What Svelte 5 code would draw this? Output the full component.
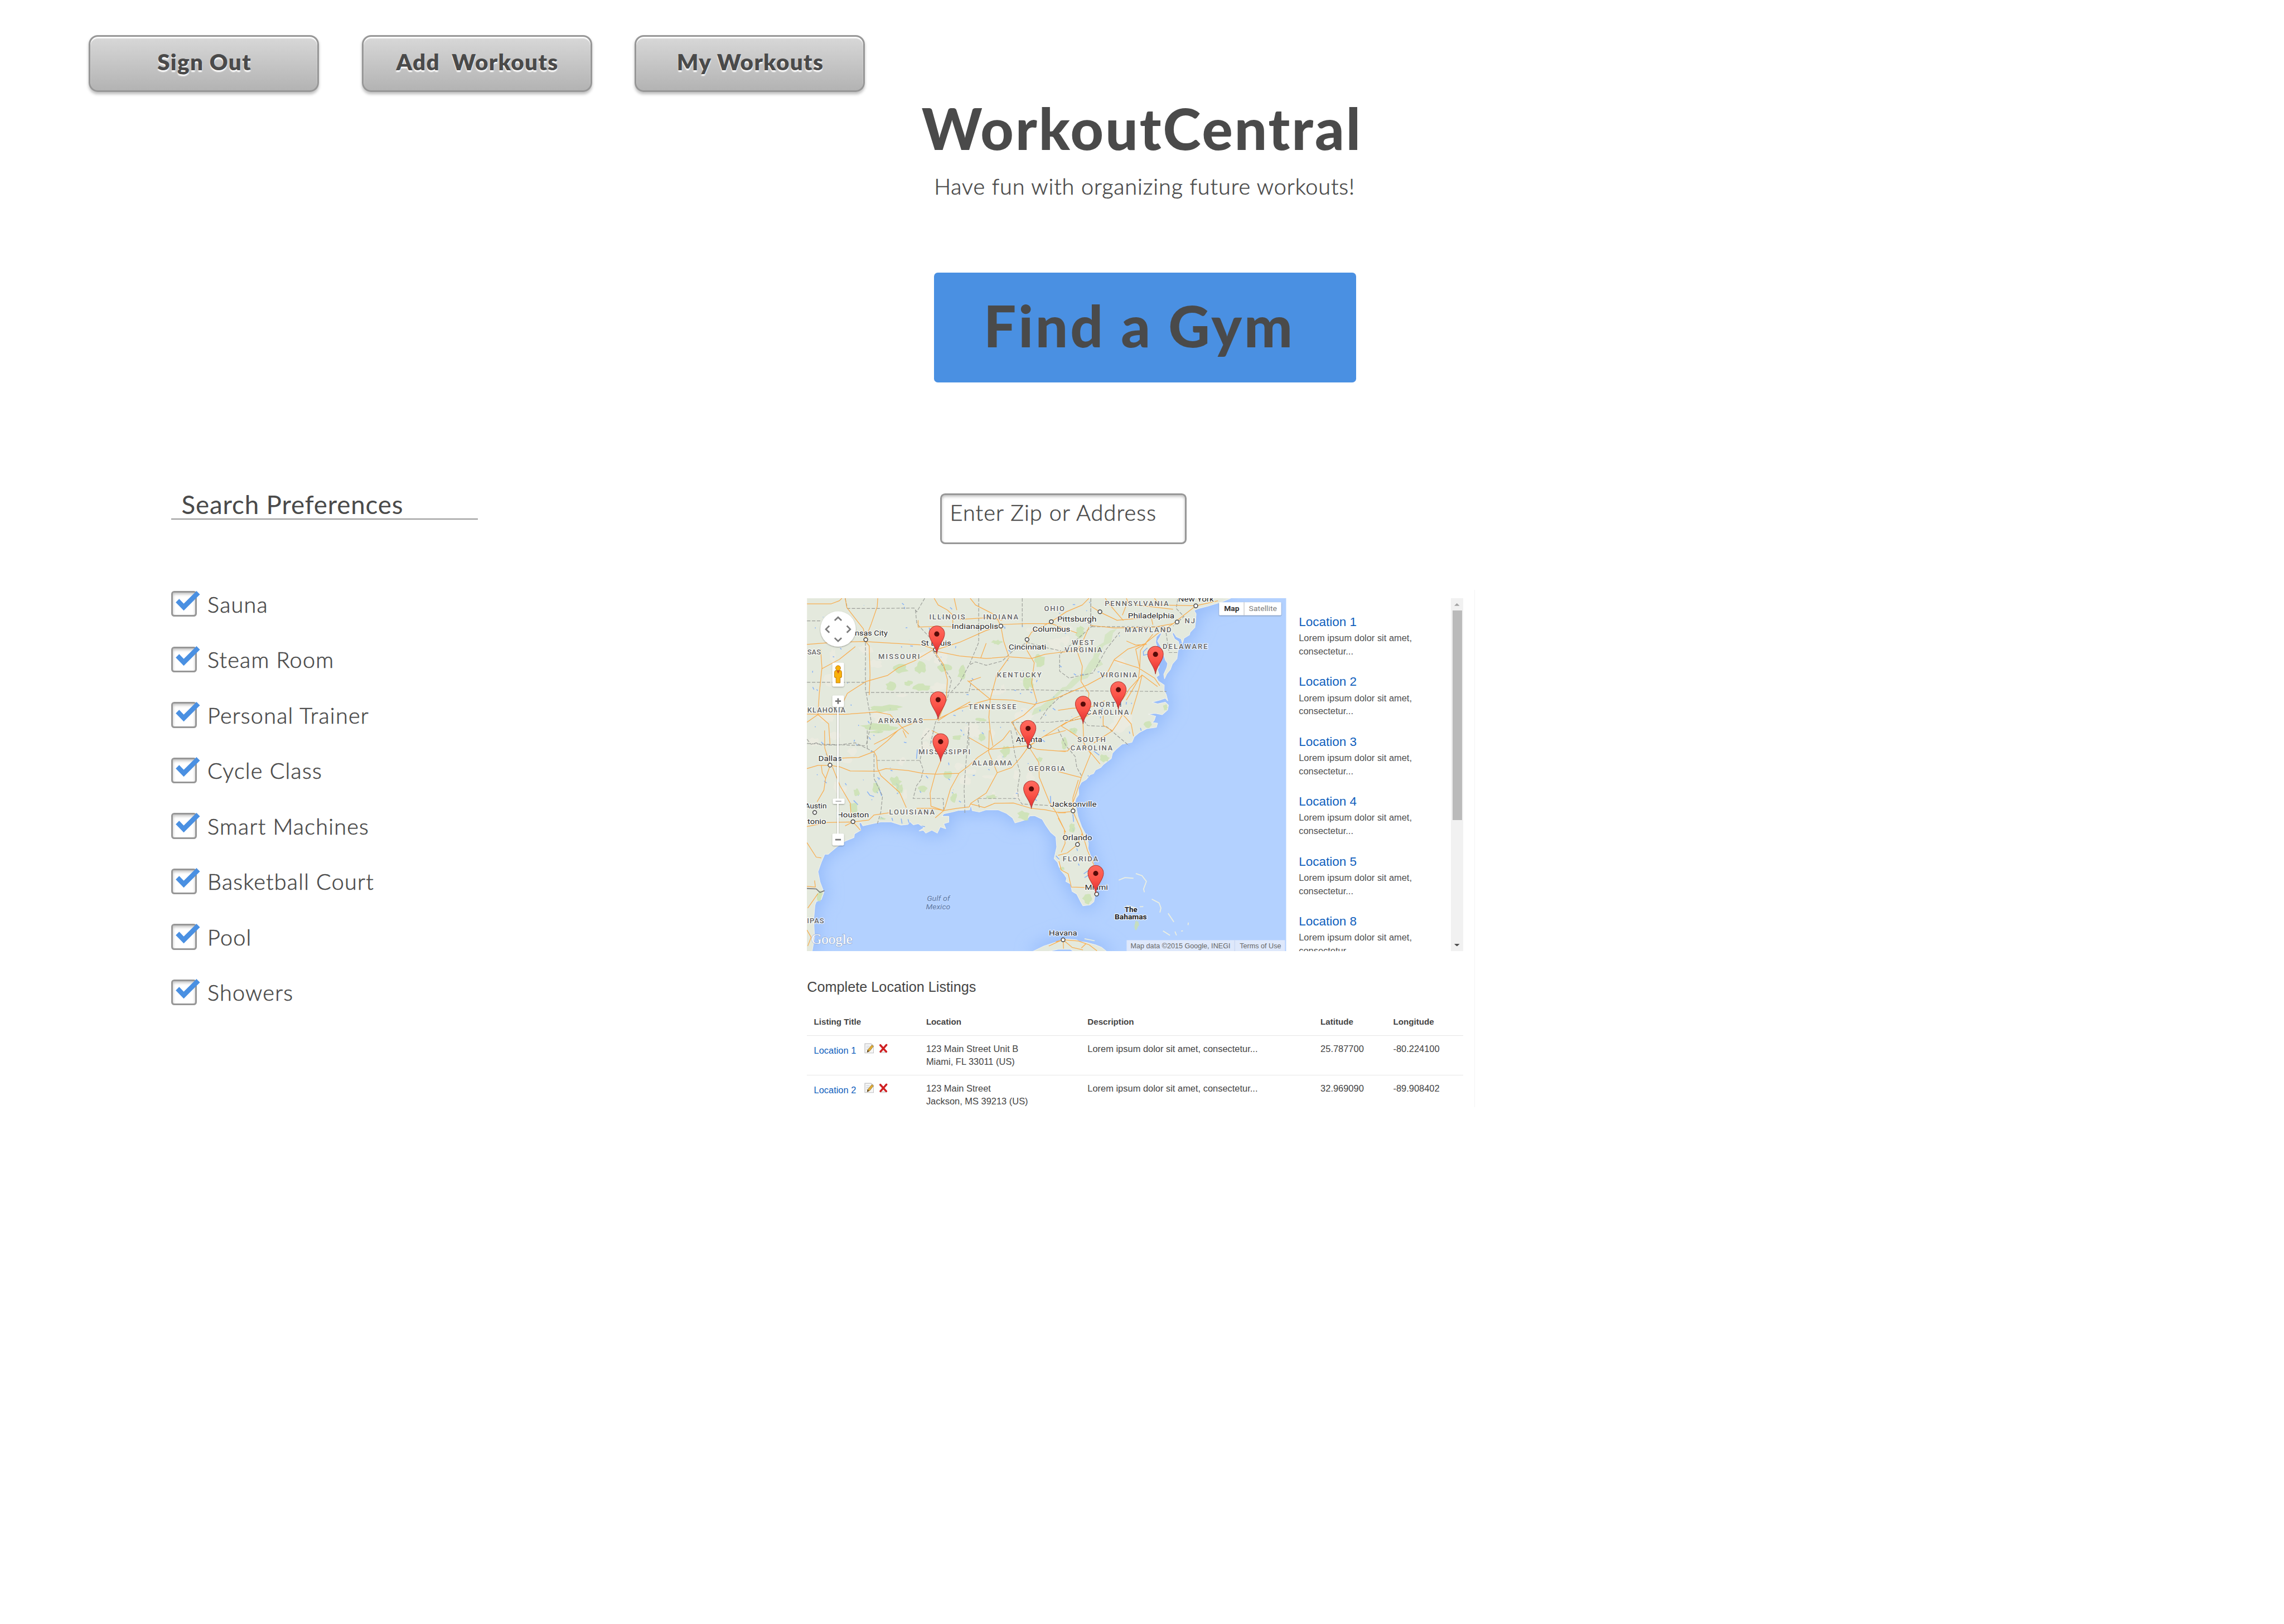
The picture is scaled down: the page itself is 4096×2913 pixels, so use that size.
<script>
  const navItems = ['Sign Out', 'Add \u00a0Workouts', 'My Workouts'];

  const preferences = [
    'Sauna', 'Steam Room', 'Personal Trainer', 'Cycle Class',
    'Smart Machines', 'Basketball Court', 'Pool', 'Showers'
  ];

  const locations = [1, 2, 3, 4, 5, 8];

  const listings = [
    { title: 'Location 1', address: ['123 Main Street Unit B', 'Miami, FL 33011 (US)'], lat: '25.787700', lng: '-80.224100' },
    { title: 'Location 2', address: ['123 Main Street', 'Jackson, MS 39213 (US)'], lat: '32.969090', lng: '-89.908402' }
  ];

  // The map is charted on four sheets, each with its own origin and scale.
  const sheets = {
    n: [2100, 1260, 0.7015, 0.4464],
    w: [2100, 1920, 0.4464, 0.3827],
    e: [2780, 1560, 0.4082, 0.3571],
    s: [2780, 2050, 0.4082, 0.3333]
  };
  const at = (sheet, x, y) => {
    const [ox, oy, sx, sy] = sheets[sheet];
    return [+(ox + x * sx).toFixed(1), +(oy + y * sy).toFixed(1)];
  };
  const chain = (sheet, text) =>
    text.trim().split(/\s+/).map((p) => at(sheet, ...p.split(',').map(Number)).join(' ')).join(' L');
  const lines = (sheet, text) => text.split(';').map((t) => 'M' + chain(sheet, t)).join(' ');

  const mainland =
    'M2120 1572 L' +
    chain('e', '0,30 1000,30 1110,36 1060,60 960,95 900,112 875,125 888,150 885,200 880,250 850,285 845,305 810,330 800,368 792,335 760,318 742,285 736,300 750,335 775,355 780,385 770,430 765,480 735,520 722,560 700,590 685,628 680,595 700,545 705,515 690,490 676,440 660,390 640,350 655,320 668,288 648,300 632,320 628,360 636,390 625,420 600,440 640,500 650,540 640,560 650,600 632,615 645,645 683,675 682,715 696,745 706,790 690,770 655,785 605,800 640,812 690,800 710,822 704,858 670,892 625,882 580,888 628,903 618,935 606,950 640,955 632,985 570,995 520,1025 490,1055 475,1095 410,1110 370,1150 350,1175 342,1215 290,1260 275,1280 240,1300 228,1325 205,1335 180,1370 150,1390 130,1430 133,1480 115,1510 108,1540') +
    ' L' +
    chain('s', '105,165 118,230 128,290 152,370 182,440 195,500 192,540 210,600 228,660 240,700 245,800 242,880 230,960 205,985 160,992 145,960 120,900 90,878 80,820 50,800 55,775 40,745 15,710 5,660 0,600') +
    ' L' +
    chain('w', '1530,940 1520,905 1500,880 1515,800 1510,730 1480,700 1450,650 1430,610 1385,585 1355,588 1340,610 1300,625 1270,635 1255,600 1220,570 1170,545 1100,545 1060,560 1018,550 1010,510 1002,545 940,548 900,560 850,572 840,590 880,590 880,630 850,640 862,675 830,662 812,705 780,685 745,705 730,685 705,690 735,668 700,640 672,648 650,625 640,645 600,650 540,628 480,628 430,640 375,655 362,630 352,640 362,685 325,710 322,735 270,760 220,800 170,850 150,850 130,905 110,970 122,1040 145,1110 130,1160 100,1175 92,1200 85,1300 90,1420 75,1520 40,1520') +
    'Z';

  const cuba =
    'M' + chain('w', '1370,1520 1440,1480 1530,1445') + ' L' +
    chain('s', '32,1252 120,1262 140,1275 180,1280 240,1300 280,1320 312,1352 100,1352 80,1335 0,1335 -60,1352') + 'Z';

  const roads = [
    lines('n', `29,733 120,733 150,715 160,700; 172,700 178,755 215,830 240,880 248,945; 294,700 292,750 270,850 250,930;
      29,972 130,960 240,955 460,975 505,1000; 248,955 262,980 265,1150 262,1270; 505,1000 430,1070 370,1110 330,1155 250,1190 180,1260 165,1310;
      505,1010 600,1040 700,1055 780,1045; 510,1005 600,960 700,890 755,864; 755,864 765,950 785,1045; 755,855 850,850 944,850;
      755,864 735,800 660,740 640,700; 853,943 870,900 944,838 1000,780 1060,740 1085,700; 785,1045 870,1055 920,1030 970,1020 1040,1010;
      853,943 850,1000 880,1080 870,1200 890,1310; 505,1010 540,1090 555,1180 550,1300 525,1400; 515,1414 600,1350 680,1310 715,1295;
      630,1185 680,1250 715,1295; 635,1190 680,1165; 785,1050 740,1150 715,1295; 715,1295 800,1300 880,1325 960,1290 1080,1210 1150,1150 1180,1060 1230,1000 1300,965;
      715,1295 710,1400 715,1480 725,1568; 885,1325 840,1390 795,1430 825,1500 860,1568; 1040,1010 1060,1100 1055,1190 1085,1260 1075,1400;
      1180,1065 1270,1110 1330,1170 1350,1215; 1300,965 1260,1000 1275,1110 1270,1180 1225,1300; 1300,960 1340,910 1400,850 1440,800 1485,745;
      860,1568 930,1500 1000,1430 1060,1405 1110,1370; 385,1462 460,1415 515,1414; 29,1382 170,1384 290,1370 340,1385 385,1462;
      70,1385 110,1440 115,1560; 29,1430 70,1385; 385,1462 330,1520 280,1560; 385,1462 410,1500; 80,1000 85,1110 75,1260 70,1385; 85,1115 150,1060 210,985;
      505,700 520,740 555,770 575,800 575,850; 445,830 445,870 520,865 600,870; 580,700 590,770; 1090,860 1180,875 1330,870 1400,850;
      1095,750 1130,785 1190,830 1260,820 1320,800; 1085,870 1060,960 1040,1010; 1210,800 1230,720 1225,700; 1330,700 1350,740 1485,745;
      1260,740 1400,765; 700,965 680,1050; 945,850 1040,905; 600,825 700,815 760,830; 1485,745 1568,715; 520,1420 560,1380 640,1310`),
    lines('w', `149,0 150,120 182,238; 45,262 110,240 182,240 240,250 300,278 460,280 510,262 640,275 730,295 805,300 940,294 1000,240 1050,185 1120,130;
      182,240 155,330 145,410 105,490; 130,240 135,290 155,330; 195,250 240,380 300,500 305,580; 45,660 165,632 316,628 410,615 440,580 530,565; 316,628 360,685; 316,628 270,655;
      245,190 350,185 440,145 520,70 580,0; 440,145 455,180 460,260 480,310 590,425 630,530; 832,210 800,300 770,430 775,520 850,550;
      940,294 890,400 860,520 850,550; 850,550 800,600; 690,535 780,535 850,550; 850,550 930,535 1000,525 1010,500 1100,430 1165,290 1115,150 1118,0; 1000,50 1060,90 1120,130 1350,105;
      1165,290 1250,255 1300,190 1350,110 1440,40 1568,0; 1350,110 1400,130 1568,145; 1350,110 1410,220 1412,320 1440,400 1475,500 1510,560;
      1010,505 1090,530 1150,500 1260,498 1365,535 1450,545 1510,560 1568,565; 1510,560 1568,700; 45,770 100,870 130,875; 610,0 630,50;
      45,1070 95,1075 90,1030; 110,1120 50,1220; 45,1370 70,1420 50,1480; 1120,130 1200,60 1240,0; 780,0 830,30`),
    lines('e', `20,975 100,920 165,890; 20,975 70,1010 160,1080; 160,950 165,1100 210,1180 150,1350 120,1460 95,1540; 165,1110 270,1255; 0,1160 60,1160 100,1110;
      415,890 380,960 350,1010 230,1100; 420,895 470,960 485,1050; 540,600 520,700 470,890; 0,1310 80,1335 150,1355; 0,860 90,845 200,840 300,790;
      290,900 290,970 350,1010; 440,350 500,380 570,375; 610,300 560,370 530,420 525,550; 640,685 540,600 460,700 415,780; 300,30 330,80 420,200; 610,230 600,180`),
    lines('s', `0,260 80,250; 0,300 40,390 45,500 20,570; 100,260 150,400 190,560 230,670; 0,595 60,575 125,510 155,420;
      5,640 20,710 65,740 85,845 240,850; 130,0 95,140 95,240; -15,1275 32,1260 130,1270 200,1300 250,1347; 32,1260 90,1320 160,1340; 32,1260 35,1330; 180,1290 150,1325; -60,1310 0,1275 32,1260`)
  ].join(' ');

  const borders = [
    lines('n', `29,833 80,833; 172,700 180,760 300,760 430,758 440,780 470,700; 435,770 440,850 500,950; 248,960 248,1255; 29,1195 245,1195; 250,1255 635,1255 645,1185;
      645,1238 900,1240 1020,1245 1375,1249; 515,1432 940,1430; 672,700 672,960 640,1080 600,1200 570,1250; 835,700 835,870; 640,1090 660,1075 700,1095 760,1070 800,1010 853,960 920,990 980,1010;
      1092,700 1092,868 1370,868 1385,1020 1420,1020; 1100,860 1020,970 975,1030 975,1130 1010,1170 1100,1140 1150,1000 1200,900; 940,1430 1060,1410 1080,1450 1150,1455 1235,1568;
      250,1255 270,1430 250,1568; 500,1010 530,1080 570,1180 555,1290 510,1430 490,1568; 635,1430 635,1568; 800,1432 830,1568; 1020,1245 970,1290 930,1350 900,1420; 29,1555 100,1560 250,1568`),
    lines('w', `45,60 70,95 100,85 130,100 230,100 330,85 400,125 440,150 440,330 490,450 480,560 460,640; 400,0 400,125; 455,206 710,206 725,130 720,60 765,0; 710,206 730,270 715,340 690,380 670,467 847,467 850,550;
      995,0 970,400 975,570; 1060,530 1050,467 1290,467 1310,505 1475,515; 1245,0 1270,170 1300,290 1285,400 1290,467`),
    lines('e', `0,1000 50,1120 110,1200 120,1280 150,1340; 210,40 210,240; 770,40 760,110 810,170 740,240`)
  ].join(' ');

  const cays = lines('s', `390,790 430,770 485,775; 500,738 540,755 568,800 550,860 555,885; 603,940 650,970 662,1010 655,1045; 708,1052 745,1120;
    675,1190 720,1225; 752,1195 762,1225; 838,1125 836,1145; 170,1252 235,1268; 440,990 500,1010; 525,1000 548,998; 792,1192 803,1190`);

  let seed = 7;
  const random = () => (seed = (seed * 16807) % 2147483647) / 2147483647;

  // An irregular patch around a centre point, with radii given in sheet units.
  function patch(sheet, cx, cy, rx, ry) {
    const points = [];
    for (let i = 0; i < 14; i++) {
      const angle = (i / 14) * Math.PI * 2;
      const reach = 0.6 + random() * 0.55;
      points.push(at(sheet, cx + Math.cos(angle) * rx * reach, cy + Math.sin(angle) * ry * reach).join(' '));
    }
    return 'M' + points.join(' L') + 'Z';
  }

  const forests = [
    ['n', 380, 1115, 30, 30], ['n', 455, 1110, 22, 38], ['n', 540, 1110, 30, 25], ['n', 610, 1140, 18, 45], ['n', 345, 1220, 22, 30], ['n', 455, 1225, 38, 22],
    ['n', 320, 1350, 70, 22], ['n', 290, 1460, 75, 25], ['n', 740, 960, 20, 15], ['n', 900, 1070, 20, 50], ['n', 860, 1190, 20, 50], ['n', 590, 1520, 18, 16],
    ['n', 680, 1415, 22, 12], ['n', 1050, 900, 18, 40], ['n', 410, 1200, 16, 16],
    ['w', 460, 10, 50, 14], ['w', 565, 350, 35, 35], ['w', 340, 425, 20, 34], ['w', 730, 400, 30, 22], ['w', 875, 305, 25, 28], ['w', 910, 460, 20, 35],
    ['w', 1075, 45, 22, 30], ['w', 1210, 140, 28, 45], ['w', 1320, 585, 40, 36], ['w', 450, 390, 24, 40], ['w', 590, 400, 22, 36], ['w', 1130, 455, 35, 14],
    ['w', 320, 525, 32, 36], ['w', 120, 1140, 18, 38], ['w', 490, 605, 20, 10], ['w', 1415, 200, 18, 20],
    ['e', 690, 840, 16, 24], ['e', 580, 965, 28, 24], ['e', 300, 1210, 32, 32], ['e', 40, 1100, 22, 45], ['e', 100, 1010, 28, 25], ['e', 150, 260, 24, 24],
    ['s', 190, 935, 34, 52], ['s', 90, 380, 22, 36], ['s', 505, 1145, 15, 40], ['s', 25, 700, 16, 14]
  ].map((f) => patch(...f)).join(' ');

  const highlands = 'M' + chain('n', '1190,880 1175,905 1168,960 1140,980 1120,1050 1138,1090 1100,1120 1080,1170 1050,1185 1020,1230 985,1250 960,1290 940,1345 920,1360 870,1390 880,1350 905,1335 950,1280 985,1225 1000,1220 1025,1175 1060,1150 1085,1080 1100,1050 1110,990 1140,960 1145,915 1165,890') + 'Z';

  const plains = Array.from({ length: 46 }, (_, i) =>
    i % 2 ? patch('n', 60 + random() * 1180, 720 + random() * 820, 10 + random() * 30, 12 + random() * 40)
          : patch('w', 70 + random() * 1350, 20 + random() * 450, 12 + random() * 30, 14 + random() * 36)
  ).join(' ');

  const lakes = Array.from({ length: 130 }, (_, i) => {
    const [x, y] = i % 3 ? at('n', 50 + random() * 1200, 720 + random() * 830) : at('w', 60 + random() * 1380, 10 + random() * 480);
    return `M${x} ${y} l${(random() * 10 - 3).toFixed(1)} ${(random() * 9 - 2).toFixed(1)}`;
  }).join(' ') + ' ' + lines('w', '450,350 470,400 485,450; 690,195 695,130; 400,420 415,445 440,455; 320,480 345,510; 1478,450 1480,500; 480,595 495,610; 545,600 550,620; 600,605 605,640; 640,610 650,650; 700,655 740,660; 1510,860 1530,885') +
    ' ' + lines('e', '600,440 550,455 548,430 575,400; 230,1160 265,1190; 190,1340 205,1350; 740,290 775,350; 530,990 535,1010') + ' ' + lines('s', '95,270 100,330; 165,740 200,710 205,770; 170,770 210,740; 95,380 100,405; 120,540 125,560; 130,660 136,675');

  const states = [
    ['n', 487, 621, 825, 'ILLINOIS'], ['n', 689, 820, 825, 'INDIANA'], ['n', 917, 993, 776, 'OHIO'], ['n', 1144, 1383, 745, 'PENNSYLVANIA'],
    ['n', 1443, 1482, 849, 'NJ'], ['n', 1219, 1393, 899, 'MARYLAND'], ['n', 1021, 1104, 975, 'WEST'], ['n', 994, 1134, 1019, 'VIRGINIA'],
    ['n', 1361, 1529, 997, 'DELAWARE'], ['n', 296, 451, 1057, 'MISSOURI'], ['n', 740, 907, 1166, 'KENTUCKY'], ['n', 1127, 1265, 1166, 'VIRGINIA'],
    ['n', 1101, 1207, 1340, 'NORTH'], ['n', 1076, 1234, 1385, 'CAROLINA'], ['n', 633, 813, 1352, 'TENNESSEE'], ['n', 296, 463, 1434, 'ARKANSAS'],
    ['n', 30, 173, 1374, 'KLAHOMA'], ['n', 30, 81, 1032, 'SAS'], ['n', 1041, 1147, 1548, 'SOUTH'], ['e', 80, 350, 1153, 'CAROLINA'],
    ['w', 702, 1007, 162, 'MISSISSIPPI'], ['w', 1017, 1252, 239, 'ALABAMA'], ['w', 1349, 1564, 279, 'GEORGIA'], ['w', 529, 797, 576, 'LOUISIANA'],
    ['s', 30, 257, 641, 'FLORIDA'], ['w', 46, 145, 1324, 'IPAS']
  ];
  const cities = [
    ['n', 1419, 1552, 720, 'New York'], ['n', 1231, 1405, 818, 'Philadelphia'], ['n', 966, 1113, 838, 'Pittsburgh'], ['n', 571, 745, 880, 'Indianapolis'],
    ['n', 873, 1015, 898, 'Columbus'], ['n', 784, 925, 1003, 'Cincinnati'], ['n', 208, 331, 921, 'nsas City'], ['n', 456, 569, 979, 'St Louis'],
    ['n', 811, 910, 1547, 'Atlanta'], ['w', 112, 250, 209, 'Dallas'], ['w', 34, 161, 535, 'Austin'], ['w', 48, 158, 642, 'tonio'],
    ['w', 222, 410, 598, 'Houston'], ['s', -53, 248, 212, 'Jacksonville'], ['s', 28, 219, 475, 'Orlando'], ['s', 172, 321, 867, 'Miami'],
    ['s', -59, 123, 1228, 'Havana']
  ];
  const countries = [['s', 428, 510, 1040, 'The'], ['s', 364, 571, 1099, 'Bahamas']];
  const waters = [['w', 751, 887, 1170, 'Gulf of'], ['w', 745, 889, 1228, 'Mexico']];

  const place = ([sheet, left, right, base, text]) => {
    const [x, y] = at(sheet, left, base);
    return { x, y, width: at(sheet, right, base)[0] - x, text };
  };
  const labels = [
    ...states.map((l) => ({ ...place(l), kind: 'state' })),
    ...cities.map((l) => ({ ...place(l), kind: 'city' })),
    ...countries.map((l) => ({ ...place(l), kind: 'country' })),
    ...waters.map((l) => ({ ...place(l), kind: 'water' }))
  ];

  const towns = [
    ['n', 1126, 780], ['n', 1415, 840], ['n', 1485, 745], ['n', 944, 838], ['n', 755, 864], ['n', 853, 943], ['n', 249, 944], ['n', 510, 1003],
    ['w', 181, 238], ['w', 91, 563], ['w', 316, 626], ['w', 1353, 110], ['s', 96, 244], ['s', 125, 509], ['s', 248, 900], ['s', 32, 1260]
  ].map((t) => at(...t));

  const pins = [
    ['n', 515, 1027], ['n', 1334, 1147], ['n', 1195, 1355], ['n', 520, 1414], ['n', 1063, 1440],
    ['n', 857, 1583], ['w', 832, 213], ['w', 1366, 537], ['s', 242, 893]
  ].map((p) => at(...p));
</script>

<div class="page">
  <nav>
    {#each navItems as item}
      <button class="nav-button">{item}</button>
    {/each}
  </nav>

  <header>
    <h1>WorkoutCentral</h1>
    <p class="tagline">Have fun with organizing future workouts!</p>
    <button class="find">Find a Gym</button>
  </header>

  <main>
    <section class="preferences">
      <h2>Search Preferences</h2>
      <ul>
        {#each preferences as name}
          <li>
            <span class="checkbox">
              <svg viewBox="0 0 76 68"><path d="M12 30 L21 21 L33 33.500 L66.500 0 L75.500 9 L33 51.500Z" /></svg>
            </span>
            <span>{name}</span>
          </li>
        {/each}
      </ul>
    </section>

    <section class="finder">
      <div class="zip">Enter Zip or Address</div>

      <div class="results">
        <svg class="map" viewBox="2120 1572.500 1259 927">
          <defs>
            <filter id="shelf" x="-20%" y="-20%" width="140%" height="140%"><feGaussianBlur stdDeviation="20" /></filter>
            <filter id="drop" x="-30%" y="-30%" width="160%" height="170%"><feDropShadow dx="0" dy="1.500" stdDeviation="1.700" flood-opacity=".38" /></filter>
            <linearGradient id="pin" x1="0" y1="0" x2="0" y2="1">
              <stop offset="0" stop-color="#ff6a5e" /><stop offset=".5" stop-color="#fb5348" /><stop offset="1" stop-color="#dd2c30" />
            </linearGradient>
            <clipPath id="ground"><path d={mainland} /></clipPath>
          </defs>
          <rect x="2120" y="1572" width="1259" height="928" fill="#b3d1ff" />
          <g filter="url(#shelf)">
            <path class="shelf" d={mainland} /><path class="shelf" d={cuba} />
          </g>
          <path class="land" d={mainland} />
          <path class="land" d={cuba} />
          <g clip-path="url(#ground)">
            <path class="plains" d={plains} />
            <path class="highlands" d={highlands} />
            <path class="lakes" d={lakes} />
          </g>
          <path class="forests" d={forests} />
          <path class="borders" d={borders} />
          <path class="roads" d={roads} />
          <path class="cays" d={cays} />
          <path class="frontier" d={lines('w', '45,1085 100,1088 122,1112 148,1100')} />

          {#each towns as [x, y]}
            <circle class="town" cx={x} cy={y} r="5" />
          {/each}
          {#each labels as label}
            <text class={label.kind} x={label.x} y={label.y} textLength={label.width} lengthAdjust={label.kind === 'state' ? 'spacing' : 'spacingAndGlyphs'}>{label.text}</text>
          {/each}

          {#each pins as [x, y]}
            <g transform="translate({x} {y})">
              <path class="pin" d="M0 0 C-2 -22 -20.500 -34 -20.500 -52.500 A20.500 20.500 0 0 1 20.500 -52.500 C20.500 -34 2 -22 0 0Z" />
              <circle cx="0" cy="-52" r="6.700" fill="#560b08" />
            </g>
          {/each}

          <g filter="url(#drop)">
            <circle cx="2202" cy="1653.500" r="46.500" fill="#fff" />
            <rect class="knob" x="2187" y="1742" width="30.500" height="62.500" rx="3" />
            <rect class="track" x="2199.500" y="1850" width="4" height="350" />
            <rect class="knob" x="2187" y="1828" width="30.500" height="30" rx="3" />
            <rect class="knob" x="2188" y="2099" width="31" height="14" rx="3" />
            <rect class="knob" x="2187" y="2191" width="30.500" height="31" rx="3" />
            <rect class="knob" x="3203" y="1583" width="163" height="34" rx="2" />
          </g>
          <path class="arrows" d="M2193 1631 L2202 1622.500 L2211 1631 M2193 1677 L2202 1685.500 L2211 1677 M2179 1645 L2170 1654 L2179 1663 M2225 1645 L2234 1654 L2225 1663" />
          <path class="signs" d="M2194.500 1843 h15 M2202 1835.500 v15 M2194.500 2207 h15" />
          <path class="grip" d="M2195.500 2106 h15" />

          <g class="pegman">
            <path d="M2192.500 1767 q0 -5 5 -5 h9 q5 0 5 5 v13 q-2 3 -4 0 v15 h-11 v-15 q-2 3 -4 0z" />
            <path class="collar" d="M2198 1763 h8.500 l-4.200 8z" />
            <circle cx="2202" cy="1756" r="6.500" />
          </g>

          <path d="M3268.500 1583 v34" stroke="#b8b8b8" stroke-width="1.500" />
          <text class="toggle on" x="3216" y="1606" textLength="40" lengthAdjust="spacingAndGlyphs">Map</text>
          <text class="toggle" x="3281" y="1606" textLength="74" lengthAdjust="spacingAndGlyphs">Satellite</text>

          <rect x="2960" y="2471" width="416" height="29" fill="#e9eefa" opacity=".8" />
          <path d="M3244 2471 v29" stroke="#c5d3ee" stroke-width="1.500" />
          <text class="legal" x="2970.500" y="2492.500" textLength="262" lengthAdjust="spacingAndGlyphs">Map data ©2015 Google, INEGI</text>
          <text class="legal" x="3257" y="2492.500" textLength="109" lengthAdjust="spacingAndGlyphs">Terms of Use</text>
          <text class="logo" x="2132" y="2480.500" textLength="108" lengthAdjust="spacingAndGlyphs">Google</text>
        </svg>

        <div class="locations">
          {#each locations as n}
            <article>
              <a>Location {n}</a>
              <p>Lorem ipsum dolor sit amet,<br />consectetur...</p>
            </article>
          {/each}
        </div>

        <div class="scrollbar">
          <svg viewBox="0 0 14 7"><path d="M0 7 L7 0 L14 7Z" fill="#a3a3a3" /></svg>
          <div class="thumb"></div>
          <svg viewBox="0 0 14 7"><path d="M0 0 L7 7 L14 0Z" fill="#505050" /></svg>
        </div>
      </div>

      <h3>Complete Location Listings</h3>
      <div class="table">
        <div class="row head">
          <span>Listing Title</span><span>Location</span><span>Description</span><span>Latitude</span><span>Longitude</span>
        </div>
        {#each listings as listing}
          <div class="row">
            <span class="title">
              <a>{listing.title}</a>
              <svg class="edit" viewBox="0 0 26 28">
                <path d="M1.500 1.500 h16 l7 6 v18.500 h-23z" fill="#f6f6f6" stroke="#bfc0c2" stroke-width="1.800" />
                <path d="M5 8 h9 M5 12.500 h7 M5 17 h4" stroke="#c9cdd2" stroke-width="1.500" />
                <path d="M20 5 l4 3.500 -10 12.500 -6.500 3 1.500 -6z" fill="#e3ae35" stroke="#8b6a26" stroke-width="1.200" />
                <path d="M9 18 l-1.700 6 5 -2.300z" fill="#4b3a28" />
              </svg>
              <svg class="delete" viewBox="0 0 24 26">
                <ellipse cx="12" cy="23" rx="9" ry="2.500" fill="#ddd" />
                <path d="M4 4 L19.500 21 M20 3.500 L4.500 21" stroke="#cf1f22" stroke-width="5.200" stroke-linecap="round" />
              </svg>
            </span>
            <span>{listing.address[0]}<br />{listing.address[1]}</span>
            <span>Lorem ipsum dolor sit amet, consectetur...</span>
            <span>{listing.lat}</span>
            <span>{listing.lng}</span>
          </div>
        {/each}
      </div>
    </section>
  </main>
</div>

<style>
  /* One rem is a sixtieth of the window's width, so the page scales as a whole. */
  :global(html) { font-size: calc(100vw / 60); background: #fff; overflow: hidden; }
  :global(body) { margin: 0; }

  .page { width: 60rem; height: 42.67rem; overflow: hidden; color: #4a4a4a; font-family: Lato, 'Open Sans', sans-serif; white-space: nowrap; }

  nav { display: flex; gap: 1.12rem; padding: 0.92rem 0 0 2.33rem; }
  button { font: inherit; color: inherit; padding: 0; display: block; box-sizing: border-box; }
  .nav-button {
    width: 6.05rem; height: 1.5rem; padding-bottom: 0.09rem;
    border: 0.05rem solid #979797; border-radius: 0.24rem;
    background: linear-gradient(#d8d8d8, #b3b3b3);
    box-shadow: inset 0 0.04rem 0.02rem #fff, 0 0.05rem 0.08rem rgba(0, 0, 0, 0.25);
    font-size: 0.59rem; font-weight: 800; letter-spacing: 0.02rem; text-indent: 0.03rem;
    text-shadow: 0 0.04rem 0.03rem #fff;
  }

  header { padding-left: 24.54rem; }
  h1 { margin: 0.15rem 0 0 -0.33rem; font-size: 1.51rem; line-height: 1.6rem; font-weight: 900; letter-spacing: 0.045rem; }
  .tagline, li, .zip { font-weight: 300; -webkit-text-stroke: 0.009rem #4a4a4a; }
  .tagline { margin: 0.37rem 0 1.93rem 0; font-size: 0.58rem; line-height: 0.7rem; letter-spacing: 0.0135rem; }
  .find {
    width: 11.09rem; height: 2.88rem; padding: 0 0 0.15rem 1.3rem; border: 0; border-radius: 0.1rem;
    background: #4a90e2; font-size: 1.51rem; font-weight: 900; text-align: left; letter-spacing: 0.057rem;
  }

  main { display: flex; padding: 2.8rem 0 0 4.5rem; }
  .preferences { width: 8.05rem; margin-right: 8.65rem; }
  h2 { margin: 0; padding-left: 0.27rem; height: 0.78rem; line-height: 0.82rem; border-bottom: 0.04rem solid #979797; font-size: 0.67rem; font-weight: 400; letter-spacing: 0.012rem; }
  ul { list-style: none; margin: 1.87rem 0 0; padding: 0; display: grid; gap: 0.778rem; }
  li { display: flex; align-items: center; gap: 0.28rem; height: 0.68rem; line-height: 0.72rem; font-size: 0.58rem; letter-spacing: 0.018rem; }
  .checkbox {
    position: relative; box-sizing: border-box; width: 0.67rem; height: 0.68rem;
    border: 0.05rem solid #979797; border-radius: 0.08rem; box-shadow: inset 0 0.04rem 0.08rem rgba(0, 0, 0, 0.25);
  }
  .checkbox svg { position: absolute; left: -0.05rem; top: -0.05rem; width: 0.76rem; height: 0.68rem; fill: #4a90e2; }

  .finder { width: 17.55rem; height: 16.25rem; background: linear-gradient(#f4f4f4, #f4f4f4) right bottom / 0.02rem 13.6rem no-repeat; }
  .zip {
    box-sizing: border-box; width: 6.47rem; height: 1.34rem; margin: 0.11rem 0 0 3.5rem; padding: 0.11rem 0 0 0.21rem;
    border: 0.05rem solid #979797; border-radius: 0.13rem; box-shadow: inset 0 0.04rem 0.08rem rgba(0, 0, 0, 0.25);
    font-size: 0.58rem; line-height: 0.7rem; letter-spacing: 0.017rem;
  }

  .results { display: flex; height: 9.27rem; margin-top: 1.425rem; }
  .map { width: 12.59rem; height: 9.27rem; flex: none; display: block; }
  .shelf { fill: #98bdfb; stroke: #98bdfb; stroke-width: 22; }
  .land { fill: #e4e9dd; stroke: #f3f3ec; stroke-width: 1.5; stroke-linejoin: round; }
  .plains { fill: #edebe0; opacity: 0.75; }
  .highlands, .forests { fill: #c9e1b0; opacity: 0.8; }
  .highlands { opacity: 0.55; }
  .lakes { fill: none; stroke: #86b2f8; stroke-width: 2.2; }
  .roads { fill: none; stroke: #fba63f; stroke-width: 1.8; stroke-linejoin: round; opacity: 0.9; }
  .borders { fill: none; stroke: #9b9d98; stroke-width: 1.7; stroke-dasharray: 9 4; }
  .frontier { fill: none; stroke: #777; stroke-width: 2.5; }
  .cays { fill: none; stroke: #eef0df; stroke-width: 2.5; }
  .town { fill: #fff; stroke: #444; stroke-width: 2.2; }
  .map text { font-family: Roboto, sans-serif; font-size: 20px; }
  .map .state, .map .city, .map .country, .map .water { paint-order: stroke; stroke: rgba(255, 255, 255, 0.75); stroke-width: 4px; stroke-linejoin: round; }
  .map .state { fill: #666; font-size: 19px; font-weight: 500; }
  .map .city { fill: #2a2a2a; }
  .map .country { fill: #222; font-weight: 700; }
  .map .water { fill: #5f7ba6; font-style: italic; stroke: rgba(190, 215, 255, 0.8); }
  .pin { fill: url(#pin); stroke: #b23a34; stroke-width: 1.5; }
  .knob { fill: #fff; }
  .track { fill: #fff; }
  .arrows { fill: none; stroke: #7b7b7b; stroke-width: 4; }
  .signs { fill: none; stroke: #777; stroke-width: 4; }
  .grip { stroke: #999; stroke-width: 2; }
  .pegman { fill: #f9b10b; stroke: #b9770a; stroke-width: 1.3; }
  .pegman .collar { fill: #cf5a12; stroke: none; }
  .map .toggle { font-size: 19px; fill: #7d7d7d; }
  .map .toggle.on { fill: #333; font-weight: 700; }
  .map .legal { font-family: 'Liberation Sans', sans-serif; font-size: 18px; fill: #666; }
  .map .logo { font-family: 'Liberation Serif', serif; font-size: 38px; fill: #fff; paint-order: stroke; stroke: #93a9cc; stroke-width: 2px; }

  .results, h3, .table { font-family: 'Liberation Sans', Arial, sans-serif; }
  .locations { width: 4.33rem; padding: 0.42rem 0 0 0.33rem; box-sizing: border-box; overflow: hidden; flex: none; }
  article { height: 1.573rem; }
  a { color: #0f60bd; display: block; }
  .locations a { font-size: 0.33rem; line-height: 0.4rem; }
  .locations p { margin: 0.055rem 0 0; font-size: 0.241rem; line-height: 0.35rem; color: #505050; }
  .scrollbar { width: 0.32rem; background: #f1f1f1; display: flex; flex-direction: column; align-items: center; padding: 0.13rem 0; box-sizing: border-box; }
  .scrollbar svg { width: 0.14rem; height: 0.07rem; display: block; }
  .thumb { width: 0.25rem; height: 5.5rem; margin: 0.12rem 0 auto; background: #bababa; }

  h3 { margin: 0.73rem 0 0; font-size: 0.37rem; line-height: 0.42rem; font-weight: 400; color: #444; }
  .table { width: 17.24rem; margin-top: 0.53rem; font-size: 0.241rem; line-height: 0.34rem; color: #444; }
  .row { display: grid; grid-template-columns: 2.95rem 4.24rem 6.12rem 1.91rem 1fr; padding-left: 0.18rem; box-sizing: border-box; height: 1.045rem; padding-top: 0.17rem; border-top: 0.02rem solid #e6e6e6; }
  .row.head { border-top: 0; height: 0.53rem; padding-top: 0; font-weight: 700; font-size: 0.222rem; }
  .title { display: flex; align-items: flex-start; }
  .title a { padding-top: 0.045rem; width: 1.32rem; }
  .edit { width: 0.26rem; height: 0.28rem; margin-top: 0.02rem; }
  .delete { width: 0.24rem; height: 0.26rem; margin: 0.03rem 0 0 0.13rem; }
</style>
